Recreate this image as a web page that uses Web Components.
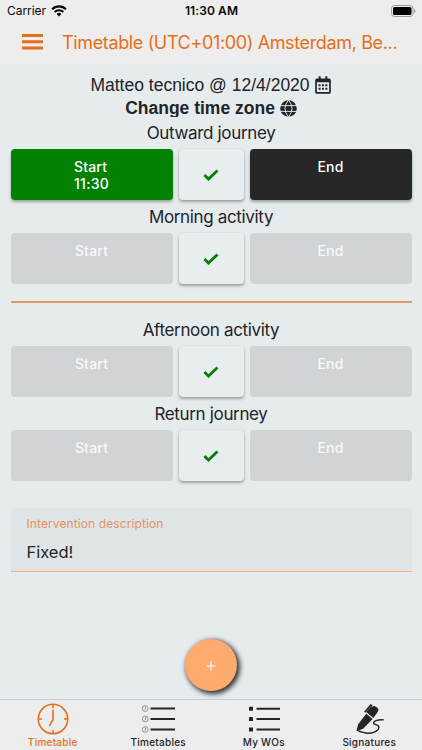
<!DOCTYPE html>
<html lang="en">
<head>
<meta charset="utf-8">
<meta name="viewport" content="width=device-width, initial-scale=1">
<title>Timetable</title>
<style>
  html, body {
    margin: 0;
    height: 100%;
    overflow: hidden;
  }
  body {
    --orange: #e66f1a;
    --ink: #222428;
    font-family: Inter, "Liberation Sans", sans-serif;
    color: var(--ink);
  }
</style>
</head>
<body>
<timetable-page></timetable-page>

<script>
class StatusBar extends HTMLElement {
  constructor() {
    super();
    this.shadowDOM = this.attachShadow({ mode: 'open' });
  }

  connectedCallback() {
    this.shadowDOM.innerHTML = `
      <style>
        :host {
          display: grid;
          grid-template-columns: 1fr auto 1fr;
          align-items: center;
          height: 22px;
          padding: 0 6px 0 7px;
          box-sizing: border-box;
          font-size: 12px;
          line-height: 22px;
          color: #080808;
        }
        .carrier {
          display: flex;
          align-items: center;
          gap: 5px;
          letter-spacing: -0.05px;
        }
        .time {
          font-weight: 600;
          letter-spacing: 0.1px;
        }
        .battery {
          justify-self: end;
        }
        svg {
          display: block;
        }
      </style>
      <div class="carrier">
        <span>Carrier</span>
        <svg width="16" height="12" viewBox="0 0 16 12" fill="none" stroke="#080808" stroke-width="2.1">
          <path d="M1.1 4.2a9.8 9.8 0 0 1 13.8 0M3.7 7a6.1 6.1 0 0 1 8.6 0"/>
          <path d="M8 11.4 5.6 9a3.5 3.5 0 0 1 4.8 0z" fill="#080808" stroke="none"/>
        </svg>
      </div>
      <div class="time">11:30 AM</div>
      <svg class="battery" width="25" height="12" viewBox="0 0 25 12">
        <rect x=".5" y=".5" width="21.5" height="11" rx="3" fill="none" stroke="#9b9b9b"/>
        <rect x="2" y="2" width="18.5" height="8" rx="1.6" fill="#000"/>
        <path d="M23.2 4v4c.8-.3 1.3-1.1 1.3-2s-.5-1.7-1.3-2z" fill="#9b9b9b"/>
      </svg>
    `;
  }
}

class AppHeader extends HTMLElement {
  constructor() {
    super();
    this.shadowDOM = this.attachShadow({ mode: 'open' });
  }

  connectedCallback() {
    this.shadowDOM.innerHTML = `
      <style>
        :host {
          display: flex;
          align-items: center;
          gap: 19px;
          height: 42px;
          padding: 0 0 0 22px;
          box-sizing: border-box;
          color: var(--orange);
        }
        svg {
          flex: none;
          margin-top: -2px;
        }
        h1 {
          margin: 0;
          font-size: 18px;
          font-weight: 400;
          line-height: 42px;
          letter-spacing: -0.36px;
          white-space: nowrap;
        }
      </style>
      <svg width="21" height="16" viewBox="0 0 21 16" fill="currentColor">
        <path d="M0 0h21v3H0zM0 6.3h21v3H0zM0 12.6h21v3H0z"/>
      </svg>
      <h1><slot></slot></h1>
    `;
  }
}

class VisitInfo extends HTMLElement {
  constructor() {
    super();
    this.shadowDOM = this.attachShadow({ mode: 'open' });
  }

  connectedCallback() {
    this.shadowDOM.innerHTML = `
      <style>
        :host {
          display: block;
          padding-top: 9px;
          font-family: "Liberation Sans", Arial, sans-serif;
          font-size: 17.5px;
        }
        .line {
          display: flex;
          justify-content: center;
          align-items: center;
          gap: 5px;
          height: 24px;
          padding-right: 1px;
          line-height: 24px;
          white-space: nowrap;
        }
        .zone {
          height: 20px;
          padding-right: 0;
          font-weight: 700;
          line-height: 23px;
          overflow: hidden;
          align-items: flex-start;
        }
        .zone svg {
          margin-top: 3px;
        }
      </style>
      <div class="line">
        <span>Matteo tecnico @ 12/4/2020</span>
        <svg width="16" height="18" viewBox="0 0 15 17">
          <path d="M1.8 3.1h11.4q.9 0 .9.9v11q0 1-1 1H1.9q-1 0-1-1V4q0-.9.9-.9z" fill="none" stroke="currentColor" stroke-width="1.6"/>
          <path d="M1 3h13v2.8H1zM3.4.2h1.9V4H3.4zM9.7.2h1.9V4H9.7zM3.3 7.7h1.9v1.9H3.3zM6.5 7.7h1.9v1.9H6.5zM9.7 7.7h1.9v1.9H9.7zM3.3 11.2h1.9v1.9H3.3zM6.5 11.2h1.9v1.9H6.5zM9.7 11.2h1.9v1.9H9.7z" fill="currentColor"/>
        </svg>
      </div>
      <div class="line zone">
        <span>Change time zone</span>
        <svg width="17" height="17" viewBox="0 0 17 17">
          <circle cx="8.5" cy="8.5" r="8.3" fill="currentColor"/>
          <path d="M0 5.6h17M0 11.4h17M8.5 0Q1.4 8.5 8.5 17Q15.6 8.5 8.5 0" fill="none" stroke="#e6ebee" stroke-width=".95"/>
        </svg>
      </div>
    `;
  }
}

class TimeButton extends HTMLElement {
  constructor() {
    super();
    this.shadowDOM = this.attachShadow({ mode: 'open' });
  }

  connectedCallback() {
    this.shadowDOM.innerHTML = `
      <style>
        :host {
          display: block;
          height: 51px;
          padding-top: 9px;
          box-sizing: border-box;
          border-radius: 4px;
          background: #d0d4d7;
          color: #f8f9fa;
          font-size: 14px;
          font-weight: 500;
          line-height: 17px;
          letter-spacing: 0.2px;
          text-align: center;
        }
        :host([tone]) {
          box-shadow: 0 2px 3px rgba(0, 0, 0, 0.32);
          color: #fff;
        }
        :host([tone="green"]) {
          background: #028102;
        }
        :host([tone="dark"]) {
          background: #272727;
        }
        .inner {
          display: inline-block;
          text-align: left;
        }
        .time {
          letter-spacing: 0.3px;
        }
      </style>
      <div class="inner">
        <div><slot></slot></div>
        <div class="time"><slot name="time"></slot></div>
      </div>
    `;
  }
}

class ActivityRow extends HTMLElement {
  constructor() {
    super();
    this.shadowDOM = this.attachShadow({ mode: 'open' });
  }

  connectedCallback() {
    const started = this.getAttribute('started');
    this.shadowDOM.innerHTML = `
      <style>
        :host {
          display: block;
        }
        h2 {
          margin: 0;
          height: 33px;
          font-size: 17px;
          font-weight: 400;
          line-height: 34px;
          letter-spacing: -0.34px;
          text-align: center;
        }
        .buttons {
          display: grid;
          grid-template-columns: 162px 65px 162px;
          gap: 6px;
        }
        .check {
          display: flex;
          align-items: center;
          justify-content: center;
          border-radius: 4px;
          background: #e8edf0;
          box-shadow: 0 2px 3px rgba(0, 0, 0, 0.3), 0 0 2px rgba(0, 0, 0, 0.1);
        }
      </style>
      <h2><slot></slot></h2>
      <div class="buttons">
        <time-button ${started ? 'tone="green"' : ''}>Start${started ? `<span slot="time">${started}</span>` : ''}</time-button>
        <div class="check">
          <svg width="16" height="12" viewBox="0 0 16 12">
            <path d="m1.4 6 4.1 4.1 9-8.7" fill="none" stroke="#078007" stroke-width="2.8"/>
          </svg>
        </div>
        <time-button ${started ? 'tone="dark"' : ''}>End</time-button>
      </div>
    `;
  }
}

class DescriptionField extends HTMLElement {
  constructor() {
    super();
    this.shadowDOM = this.attachShadow({ mode: 'open' });
  }

  connectedCallback() {
    this.shadowDOM.innerHTML = `
      <style>
        :host {
          display: block;
          height: 64px;
          padding: 8px 16px 0;
          box-sizing: border-box;
          border-radius: 3px 3px 0 0;
          background: linear-gradient(#f2b081, #f2b081) bottom / 100% 1.5px no-repeat #dfe4e6;
        }
        .label {
          font-size: 12px;
          line-height: 16px;
          letter-spacing: 0.1px;
          color: #e59260;
        }
        .value {
          margin-top: 8px;
          font-size: 16.5px;
          line-height: 24px;
        }
      </style>
      <div class="label">${this.getAttribute('label')}</div>
      <div class="value"><slot></slot></div>
    `;
  }
}

class AddButton extends HTMLElement {
  constructor() {
    super();
    this.shadowDOM = this.attachShadow({ mode: 'open' });
  }

  connectedCallback() {
    this.shadowDOM.innerHTML = `
      <style>
        :host {
          display: flex;
          align-items: center;
          justify-content: center;
          width: 52px;
          height: 52px;
          border-radius: 50%;
          background: #ffab70;
          box-shadow: 2px 2px 5px 1px rgba(0, 0, 0, 0.8);
        }
        svg {
          margin-top: 2px;
        }
      </style>
      <svg width="10" height="10" viewBox="0 0 10 10">
        <path d="M5 .3v9.4M.3 5h9.4" stroke="#fff" stroke-width="1.2"/>
      </svg>
    `;
  }
}

class TabItem extends HTMLElement {
  constructor() {
    super();
    this.shadowDOM = this.attachShadow({ mode: 'open' });
  }

  connectedCallback() {
    this.shadowDOM.innerHTML = `
      <style>
        :host {
          display: flex;
          flex-direction: column;
          align-items: center;
          padding-top: 3px;
          font-size: 10px;
          font-weight: 500;
          line-height: 14px;
          letter-spacing: 0.25px;
          color: #242424;
        }
        :host([active]) {
          color: var(--orange);
        }
        .icon {
          height: 32px;
        }
      </style>
      <div class="icon"><slot name="icon"></slot></div>
      <div><slot></slot></div>
    `;
  }
}

class TabBar extends HTMLElement {
  constructor() {
    super();
    this.shadowDOM = this.attachShadow({ mode: 'open' });
  }

  connectedCallback() {
    const dial = (y) => `
      <circle cx="4.2" cy="${y}" r="2.9" stroke-width=".7" stroke="#707070"/>
      <path d="M4.6 ${y - 1.9}V${y}l-.8 1.4" stroke-width=".7" stroke="#707070"/>
      <path d="M9.5 ${y}H34" stroke-width="2"/>`;
    this.shadowDOM.innerHTML = `
      <style>
        :host {
          display: grid;
          grid-template-columns: repeat(4, 1fr);
          height: 51px;
          border-top: 1px solid #c9cdd0;
          box-sizing: border-box;
          background: #ededed;
        }
        svg {
          display: block;
        }
      </style>
      <tab-item active>
        <svg slot="icon" width="32" height="32" viewBox="0 0 32 32" fill="none" stroke="currentColor" stroke-width="1.6">
          <circle cx="16" cy="16" r="14.7"/>
          <path d="M16 1v4M16 27v4M1 16h4M27 16h4M16 6.5v10l-3.7 6.7"/>
        </svg>
        Timetable
      </tab-item>
      <tab-item>
        <svg slot="icon" width="34" height="32" viewBox="0 0 34 32" fill="none" stroke="currentColor">
          ${dial(5.5)}${dial(16)}${dial(26.5)}
        </svg>
        Timetables
      </tab-item>
      <tab-item>
        <svg slot="icon" width="32" height="32" viewBox="0 0 32 32" fill="currentColor">
          <path d="M1 3.7h4v4H1zM1 14h4v4H1zM1 24.5h4v4H1zM8.5 4.7H32v2H8.5zM8.5 15.1H32v2H8.5zM8.5 25.5H32v2H8.5z"/>
        </svg>
        My WOs
      </tab-item>
      <tab-item>
        <svg slot="icon" width="32" height="32" viewBox="0 0 32 32" fill="none" stroke="currentColor">
          <path d="m14.1 9.8 4.7-5.6q1.9-2.2 4.2-.4l1.3 1q2.1 1.8.4 4.1l-4.4 6z" fill="currentColor" stroke="none"/>
          <path d="m13.3 10.8 6.3 5.1-9 9.3-5.9 3.1-1.2-.9 1.8-6.4z" fill="currentColor" stroke="none"/>
          <path d="m11.6 9.2 6.1-7.3 1.4 1M13.7 9.6l5-6" stroke-width="1.5"/>
          <path d="M30.8 16.9c-5-.6-10.6.7-10.2 3.2.3 2 5.8 1.3 5.3 4.5-.5 3.8-7.5 6.3-13 5.4-3-.5-5-1.6-7.4-1.8" stroke-width="1.4"/>
        </svg>
        Signatures
      </tab-item>
    `;
  }
}

class TimetablePage extends HTMLElement {
  constructor() {
    super();
    this.shadowDOM = this.attachShadow({ mode: 'open' });
  }

  connectedCallback() {
    this.shadowDOM.innerHTML = `
      <style>
        :host {
          display: flex;
          flex-direction: column;
          height: 100vh;
          background: #e6ebee;
        }
        header {
          flex: none;
          height: 64px;
          background: #ededed;
        }
        main {
          display: flex;
          flex-direction: column;
          flex: 1;
          min-height: 0;
          padding: 0 10.5px;
        }
        main > * {
          flex: none;
        }
        visit-info {
          height: 43px;
        }
        hr {
          width: 100%;
          height: 2px;
          margin: 17px 0 10px;
          border: 0;
          background: #e09b69;
        }
        description-field {
          margin-top: 27px;
        }
        add-button {
          align-self: center;
          margin-top: auto;
          margin-bottom: 8.5px;
        }
      </style>
      <header>
        <status-bar></status-bar>
        <app-header>Timetable (UTC+01:00) Amsterdam, Be...</app-header>
      </header>
      <main>
        <visit-info></visit-info>
        <activity-row started="11:30">Outward journey</activity-row>
        <activity-row>Morning activity</activity-row>
        <hr>
        <activity-row>Afternoon activity</activity-row>
        <activity-row>Return journey</activity-row>
        <description-field label="Intervention description">Fixed!</description-field>
        <add-button></add-button>
      </main>
      <tab-bar></tab-bar>
    `;
  }
}

customElements.define('status-bar', StatusBar);
customElements.define('app-header', AppHeader);
customElements.define('visit-info', VisitInfo);
customElements.define('time-button', TimeButton);
customElements.define('activity-row', ActivityRow);
customElements.define('description-field', DescriptionField);
customElements.define('add-button', AddButton);
customElements.define('tab-item', TabItem);
customElements.define('tab-bar', TabBar);
customElements.define('timetable-page', TimetablePage);
</script>
</body>
</html>
